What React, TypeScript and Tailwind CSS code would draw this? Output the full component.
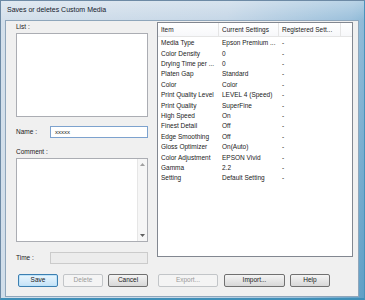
import type { ReactNode } from 'react'

const rows: [string, string][] = [
  ['Media Type', 'Epson Premium ...'],
  ['Color Density', '0'],
  ['Drying Time per ...', '0'],
  ['Platen Gap', 'Standard'],
  ['Color', 'Color'],
  ['Print Quality Level', 'LEVEL 4 (Speed)'],
  ['Print Quality', 'SuperFine'],
  ['High Speed', 'On'],
  ['Finest Detail', 'Off'],
  ['Edge Smoothing', 'Off'],
  ['Gloss Optimizer', 'On(Auto)'],
  ['Color Adjustment', 'EPSON Vivid'],
  ['Gamma', '2.2'],
  ['Setting', 'Default Setting'],
]

function Btn({ children, kind = 'normal', w = 'w-[40px]' }: { children: ReactNode; kind?: 'normal' | 'default' | 'disabled'; w?: string }) {
  const cls =
    kind === 'default'
      ? 'border-[#3c7fb1] bg-gradient-to-b from-[#eaf6fd] to-[#c4e2f7] text-[#1a1a1a] shadow-[inset_0_0_0_1px_#bfe3f9]'
      : kind === 'disabled'
        ? 'border-[#c2c5c8] bg-[#f4f4f4] text-[#9a9a9a]'
        : 'border-[#707070] bg-gradient-to-b from-[#f4f4f4] to-[#d8d8d8] text-[#1a1a1a]'
  return (
    <div className={`${w} h-[13px] rounded-[2px] border flex items-center justify-center text-[6.5px] leading-none ${cls}`}>
      {children}
    </div>
  )
}

export default function App() {
  return (
    <div
      className="w-[365px] h-[300px] flex flex-col bg-[linear-gradient(100deg,#d4e0eb_0%,#c6d7e7_55%,#9cc1dc_85%,#5f9fc6_100%)] border border-[#6d8aa5] border-b-[2px] border-b-[#3f8fb8] border-r-[#4a92bb]"
      style={{ fontFamily: '"Liberation Sans", Arial, sans-serif' }}
    >
      <div className="h-[19px] shrink-0 flex items-center pl-[6px] text-[7px] text-[#15202c] bg-gradient-to-b from-white/30 to-transparent">
        Saves or deletes Custom Media
      </div>
      <div className="flex-1 ml-[4px] mr-[5px] mb-[1px] bg-[#f0f0f0] border border-[#8fa6bb] flex flex-col text-[6.5px] text-[#1a1a1a]">
        <div className="flex pl-[10px] pt-[1px] gap-[9px]">
          {/* left column */}
          <div className="w-[132px] flex flex-col">
            <div className="h-[10px] leading-[10px]">List :</div>
            <div className="mt-[1px] h-[84px] bg-white border border-[#abadb3]" />
            <div className="mt-[9px] h-[12px] flex items-center">
              <div className="w-[34px]">Name :</div>
              <div className="flex-1 h-full bg-white border border-[#7da2ce] flex items-center pl-[4px] text-[6px]">xxxxx</div>
            </div>
            <div className="mt-[9px] h-[10px] leading-[10px]">Comment :</div>
            <div className="mt-[1px] h-[84px] bg-white border border-[#abadb3] flex justify-end">
              <div className="w-[10px] h-full bg-[#f6f6f6] border-l border-[#e6e6e6] flex flex-col items-center justify-between py-[4px]">
                <svg width="5" height="3" viewBox="0 0 5 3"><path d="M0 3 L2.5 0 L5 3 Z" fill="#a0a0a0" /></svg>
                <svg width="5" height="3" viewBox="0 0 5 3"><path d="M0 0 L2.5 3 L5 0 Z" fill="#606060" /></svg>
              </div>
            </div>
            <div className="mt-[10px] h-[12px] flex items-center">
              <div className="w-[34px]">Time :</div>
              <div className="flex-1 h-full bg-[#ececec] border border-[#cbcbcb]" />
            </div>
          </div>
          {/* table */}
          <div className="w-[196px] h-[235px] bg-white border border-[#828790] flex flex-col">
            <div className="h-[14px] flex border-b border-[#e5e5e5] bg-gradient-to-b from-white to-[#f7f8fa]">
              <div className="w-[61px] border-r border-[#e5e5e5] flex items-center pl-[3px]">Item</div>
              <div className="w-[60px] border-r border-[#e5e5e5] flex items-center pl-[3px]">Current Settings</div>
              <div className="w-[62px] border-r border-[#e5e5e5] flex items-center pl-[3px] whitespace-nowrap overflow-hidden">Registered Sett...</div>
              <div className="flex-1" />
            </div>
            <div className="pt-[1px] flex flex-col">
              {rows.map(([k, v]) => (
                <div key={k} className="h-[10.4px] flex items-center whitespace-nowrap">
                  <div className="w-[61px] pl-[3px] overflow-hidden">{k}</div>
                  <div className="w-[60px] pl-[3px] overflow-hidden">{v}</div>
                  <div className="w-[62px] pl-[3px]">-</div>
                </div>
              ))}
            </div>
          </div>
        </div>
        <div className="mt-[10px] flex pl-[12px]">
          <Btn kind="default">Save</Btn>
          <div className="ml-[5px]"><Btn kind="disabled">Delete</Btn></div>
          <div className="ml-[5px]"><Btn>Cancel</Btn></div>
          <div className="ml-[10px]"><Btn kind="disabled" w="w-[60px]">Export...</Btn></div>
          <div className="ml-[6px]"><Btn w="w-[61px]">Import...</Btn></div>
          <div className="ml-[5px]"><Btn>Help</Btn></div>
        </div>
      </div>
    </div>
  )
}
